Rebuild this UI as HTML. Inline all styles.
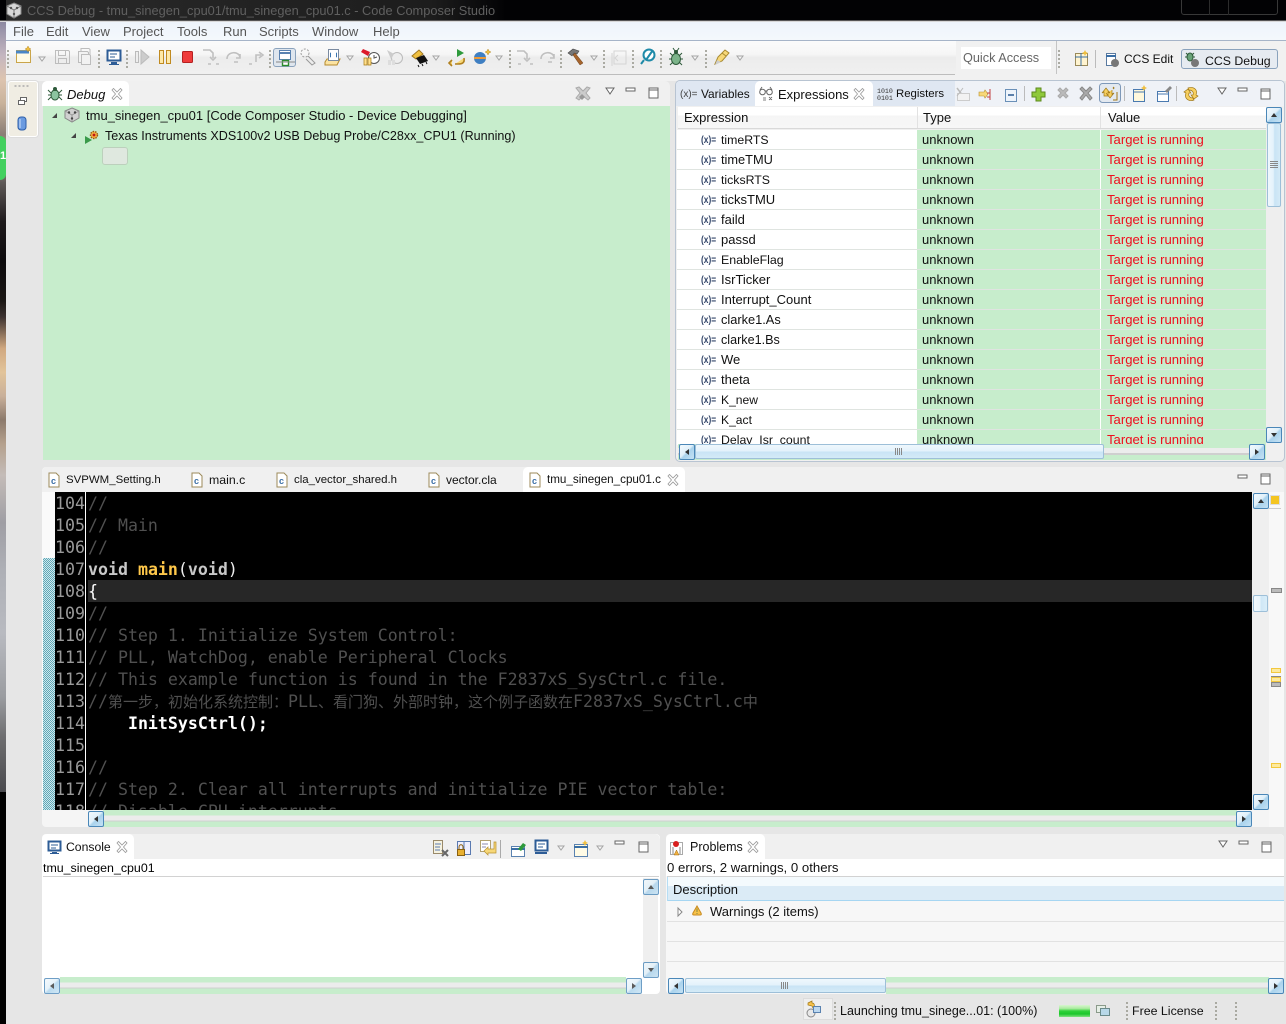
<!DOCTYPE html>
<html><head><meta charset="utf-8"><title>CCS Debug</title>
<style>
html,body{margin:0;padding:0;width:1286px;height:1024px;overflow:hidden;background:#e6e6e6}
#p{position:relative;width:1286px;height:1024px;overflow:hidden;font:13px "Liberation Sans",sans-serif;color:#111}
.a{position:absolute}
.t{position:absolute;white-space:nowrap;line-height:16px;height:16px}
.m{top:24px;color:#555;font-size:13px}
.g{background:#c7edcc}
.r{position:absolute;left:0;width:589px;height:20px}
.r i{position:absolute;font-style:normal;line-height:20px;white-space:nowrap;top:0}
.r .n{left:44px}
.r .k{left:240px;width:183px;height:20px;background:#c7edcc;text-indent:5px}
.r .v{left:424px;width:165px;height:20px;background:#c7edcc;color:#f00c1c;text-indent:6px;font-size:13.1px}
.r .l{position:absolute;left:0;right:0;bottom:0;height:1px;background:#dfe4e0}
.c{position:absolute;left:0;height:22px;font:16.6px/22px "DejaVu Sans Mono","Liberation Mono",monospace;white-space:pre;color:#505050}
.c b{font-weight:bold}
.n1{color:#9a9a9a}
.s3{margin-left:3px}
.cj{font:15px/22px "Noto Sans CJK SC",sans-serif}
.sb{position:absolute;width:14px;height:14px;border:1px solid #4a87b8;border-radius:2px;background:linear-gradient(135deg,#f3f9fd 0,#e0f0fa 45%,#a9d2ec 55%,#c5e2f4 100%);box-sizing:content-box}
.sb.f{opacity:.8}
.sb::after{content:"";position:absolute;width:0;height:0}
.sb.u::after{left:4px;top:5px;border:3px solid transparent;border-bottom:4px solid #333;border-top:0}
.sb.d::after{left:4px;top:5px;border:3px solid transparent;border-top:4px solid #333;border-bottom:0}
.sb.l::after{left:5px;top:4px;border:3px solid transparent;border-right:4px solid #333;border-left:0}
.sb.r2::after{left:5px;top:4px;border:3px solid transparent;border-left:4px solid #333;border-right:0}
.hth{position:absolute;border:1px solid #9dbfd8;border-radius:2px;background:linear-gradient(180deg,#eff8fd 0,#e4f2fb 45%,#c9e4f5 55%,#d4eaf7 100%);box-sizing:border-box}
.tr{position:absolute;background:linear-gradient(180deg,#c7edcc 0,#c7edcc 31%,#ececec 31%,#ececec 62%,#cfcfcf 62%,#cfcfcf 69%,#c7edcc 69%)}
.tab{position:absolute;background:#fff;border-radius:5px 5px 0 0}
.bar{position:absolute;background:#f0f0f0;border-radius:5px 5px 0 0}
</style></head><body><div id="p">

<!-- wallpaper strip -->
<div class="a" style="left:0;top:0;width:6px;height:792px;background:linear-gradient(180deg,#6b6a80 0,#8f8ca4 3%,#c4b6c0 7%,#ddc4b0 10%,#c9b39c 13%,#8a7d76 17%,#b8a090 20%,#5f5a58 23%,#1e1a1c 28%,#0c0a0c 33%,#1a1614 38%,#3c3230 40%,#d0a880 44%,#e2c49a 47%,#c9b09a 50%,#8c7a6c 53%,#b4a08c 56%,#c4bcb8 60%,#9f9ea4 66%,#aeb0b6 72%,#b8bac0 80%,#9a9ca0 88%,#6e6e70 93%,#4a4a4e 100%)"></div>
<div class="a" style="left:0;top:792px;width:6px;height:232px;background:#000"></div>
<div class="a" style="left:0;top:136px;width:6px;height:44px;background:#43d05f;border-radius:0 10px 10px 0"></div>
<div class="t" style="left:0;top:148px;color:#fff;font-weight:bold;font-size:11px">1</div>

<!-- title -->
<div class="a" style="left:0;top:0;width:1286px;height:20px;background:#020204"></div>
<div class="a" style="left:6px;top:0;width:500px;height:20px;background:linear-gradient(90deg,#2a2a2a 0,#1d1d1d 85%,#020204 100%)"></div>
<div class="a" style="left:0;top:20px;width:1286px;height:1px;background:#555"></div>
<div class="a" style="left:0;top:21px;width:1286px;height:1px;background:#d8d8d8"></div>
<div class="t" style="left:27px;top:3px;color:#606060;font-size:12.8px">CCS Debug - tmu_sinegen_cpu01/tmu_sinegen_cpu01.c - Code Composer Studio</div>
<div class="a" style="left:1181px;top:-3px;width:97px;height:18px;border:1px solid #383838;border-radius:3px;box-sizing:border-box"></div>
<div class="a" style="left:1209px;top:0;width:1px;height:15px;background:#2c2c2c"></div>
<div class="a" style="left:1228px;top:0;width:1px;height:15px;background:#2c2c2c"></div>

<!-- menu -->
<div class="a" style="left:6px;top:22px;width:1280px;height:18px;background:linear-gradient(180deg,#eef4fb,#f4f8fc)"></div>
<div class="a" style="left:6px;top:40px;width:1280px;height:1px;background:#a6b4c8"></div>
<div class="t m" style="left:13px">File</div><div class="t m" style="left:46px">Edit</div><div class="t m" style="left:82px">View</div><div class="t m" style="left:123px">Project</div><div class="t m" style="left:177px">Tools</div><div class="t m" style="left:223px">Run</div><div class="t m" style="left:259px">Scripts</div><div class="t m" style="left:312px">Window</div><div class="t m" style="left:373px">Help</div>

<!-- toolbar -->
<div class="a" style="left:6px;top:41px;width:1280px;height:40px;background:#f1f1f1"></div>
<div class="a" style="left:6px;top:41px;width:950px;height:33px;background:linear-gradient(180deg,#fbfbfb 0,#f6f6f6 40%,#ececec 50%,#f0f0f0 100%)"></div>
<div class="a" style="left:6px;top:74px;width:949px;height:1px;background:#bdbdbd"></div>
<div class="a" style="left:956px;top:41px;width:100px;height:33px;background:#f1f1f1"></div>
<div class="a" style="left:1056px;top:41px;width:1px;height:33px;background:#c4c4c4"></div>
<div class="a" style="left:961px;top:47px;width:90px;height:22px;background:#fff"></div>
<div class="t" style="left:963px;top:50px;color:#666;font-size:12.7px">Quick Access</div>
<div class="a" style="left:273px;top:48px;width:23px;height:19px;border:1px solid #8aa2bc;border-radius:3px;background:#dfe6ee;box-sizing:border-box"></div>
<div class="a" style="left:1181px;top:49px;width:97px;height:20px;border:1px solid #8aa2bc;border-radius:3px;background:#e6ebf1;box-sizing:border-box"></div>
<div class="t" style="left:1124px;top:51px;font-size:12px">CCS Edit</div>
<div class="t" style="left:1205px;top:53px;font-size:12.3px">CCS Debug</div>

<!-- left trim -->
<div class="a" style="left:8px;top:81px;width:30px;height:56px;background:#f0ede3;border:1px solid #fff;border-radius:3px;box-shadow:0 0 0 1px #ddd;box-sizing:border-box"></div>

<!-- Debug view -->
<div class="bar" style="left:42px;top:81px;width:628px;height:25px"></div>
<div class="tab" style="left:42px;top:81px;width:87px;height:25px"></div>
<div class="t" style="left:67px;top:87px;font-style:italic;font-size:13px">Debug</div>
<div class="a g" style="left:43px;top:106px;width:627px;height:354px"></div>
<div class="t" style="left:86px;top:108px">tmu_sinegen_cpu01 [Code Composer Studio - Device Debugging]</div>
<div class="t" style="left:105px;top:128px;font-size:12.57px">Texas Instruments XDS100v2 USB Debug Probe/C28xx_CPU1 (Running)</div>
<div class="a" style="left:102px;top:147px;width:26px;height:18px;background:#dfe8df;border:1px solid #bcd0bc;border-radius:3px;box-sizing:border-box"></div>

<!-- Expressions view -->
<div class="a" style="left:675px;top:80px;width:610px;height:382px;border:1px solid #b8c4d2;border-radius:5px;background:#f0f0f0;box-sizing:border-box"></div>
<div class="a" style="left:676px;top:81px;width:608px;height:25px;background:#dfe7f2;border-radius:4px 4px 0 0"></div>
<div class="a" style="left:955px;top:81px;width:329px;height:25px;background:#eff2f7;border-radius:0 4px 0 0"></div>
<div class="tab" style="left:755px;top:81px;width:118px;height:25px"></div>
<div class="t" style="left:701px;top:86px;font-size:11.9px">Variables</div>
<div class="t" style="left:778px;top:87px">Expressions</div>
<div class="t" style="left:896px;top:86px;font-size:11.4px">Registers</div>
<div class="a" style="left:678px;top:107px;width:588px;height:21px;background:linear-gradient(180deg,#fff 0,#fff 40%,#f5f5f5 40%,#f7f7f7 100%)"></div>
<div class="a" style="left:678px;top:128px;width:588px;height:1px;background:#d9d9d9"></div>
<div class="a" style="left:917px;top:107px;width:1px;height:21px;background:#e2e2e2"></div>
<div class="a" style="left:1100px;top:107px;width:1px;height:21px;background:#e2e2e2"></div>
<div class="t" style="left:684px;top:110px">Expression</div><div class="t" style="left:923px;top:110px">Type</div><div class="t" style="left:1108px;top:110px">Value</div>
<div class="a" style="left:677px;top:130px;width:589px;height:315px;overflow:hidden;background:#fff">
<div class="r" style="top:0"><i class="n" style="font-size:12.3px">timeRTS</i><i class="k">unknown</i><i class="v">Target is running</i><span class="l"></span></div>
<div class="r" style="top:20px"><i class="n" style="font-size:12.8px">timeTMU</i><i class="k">unknown</i><i class="v">Target is running</i><span class="l"></span></div>
<div class="r" style="top:40px"><i class="n" style="font-size:12.3px">ticksRTS</i><i class="k">unknown</i><i class="v">Target is running</i><span class="l"></span></div>
<div class="r" style="top:60px"><i class="n">ticksTMU</i><i class="k">unknown</i><i class="v">Target is running</i><span class="l"></span></div>
<div class="r" style="top:80px"><i class="n">faild</i><i class="k">unknown</i><i class="v">Target is running</i><span class="l"></span></div>
<div class="r" style="top:100px"><i class="n">passd</i><i class="k">unknown</i><i class="v">Target is running</i><span class="l"></span></div>
<div class="r" style="top:120px"><i class="n" style="font-size:12.4px">EnableFlag</i><i class="k">unknown</i><i class="v">Target is running</i><span class="l"></span></div>
<div class="r" style="top:140px"><i class="n">IsrTicker</i><i class="k">unknown</i><i class="v">Target is running</i><span class="l"></span></div>
<div class="r" style="top:160px"><i class="n">Interrupt_Count</i><i class="k">unknown</i><i class="v">Target is running</i><span class="l"></span></div>
<div class="r" style="top:180px"><i class="n" style="font-size:12.8px">clarke1.As</i><i class="k">unknown</i><i class="v">Target is running</i><span class="l"></span></div>
<div class="r" style="top:200px"><i class="n" style="font-size:12.6px">clarke1.Bs</i><i class="k">unknown</i><i class="v">Target is running</i><span class="l"></span></div>
<div class="r" style="top:220px"><i class="n">We</i><i class="k">unknown</i><i class="v">Target is running</i><span class="l"></span></div>
<div class="r" style="top:240px"><i class="n">theta</i><i class="k">unknown</i><i class="v">Target is running</i><span class="l"></span></div>
<div class="r" style="top:260px"><i class="n" style="font-size:12.1px">K_new</i><i class="k">unknown</i><i class="v">Target is running</i><span class="l"></span></div>
<div class="r" style="top:280px"><i class="n" style="font-size:12.1px">K_act</i><i class="k">unknown</i><i class="v">Target is running</i><span class="l"></span></div>
<div class="r" style="top:300px"><i class="n" style="font-size:12.3px">Delay_Isr_count</i><i class="k">unknown</i><i class="v">Target is running</i><span class="l"></span></div>
</div>
<!-- expr scrollbars -->
<div class="a" style="left:1266px;top:107px;width:16px;height:336px;background:#eee"></div>
<div class="hth" style="left:1267px;top:123px;width:14px;height:84px;background:linear-gradient(90deg,#eff8fd 0,#e4f2fb 45%,#c9e4f5 55%,#d4eaf7 100%)"></div>
<div class="a" style="left:1270px;top:161px;width:8px;height:8px;background:repeating-linear-gradient(180deg,#888 0,#888 1px,transparent 1px,transparent 2px)"></div>
<div class="sb u" style="left:1266px;top:107px"></div><div class="sb d" style="left:1266px;top:427px"></div>
<div class="a" style="left:678px;top:444px;width:588px;height:16px;background:#c7edcc"></div>
<div class="a" style="left:678px;top:448px;width:572px;height:5px;background:#ececec"></div>
<div class="a" style="left:678px;top:453px;width:572px;height:2px;background:#cfcfcf"></div>
<div class="a" style="left:678px;top:455px;width:588px;height:5px;background:#c7edcc"></div>
<div class="hth" style="left:695px;top:444px;width:409px;height:15px"></div>
<div class="a" style="left:895px;top:448px;width:8px;height:7px;background:repeating-linear-gradient(90deg,#888 0,#888 1px,transparent 1px,transparent 2px)"></div>
<div class="sb l" style="left:679px;top:444px"></div><div class="sb r2" style="left:1249px;top:444px"></div>

<!-- Editor -->
<div class="a" style="left:42px;top:467px;width:1242px;height:360px;background:#f5f5f5;border-radius:4px"></div>
<div class="bar" style="left:42px;top:467px;width:1242px;height:25px"></div>
<div class="tab" style="left:523px;top:467px;width:162px;height:25px"></div>
<div class="t" style="left:66px;top:472px;font-size:11.45px">SVPWM_Setting.h</div>
<div class="t" style="left:209px;top:472px;font-size:12.3px">main.c</div>
<div class="t" style="left:294px;top:472px;font-size:11.45px">cla_vector_shared.h</div>
<div class="t" style="left:446px;top:472px;font-size:12px">vector.cla</div>
<div class="t" style="left:547px;top:472px;font-size:11.65px">tmu_sinegen_cpu01.c</div>
<div class="a" style="left:42px;top:492px;width:13px;height:318px;background:#fafafa"></div>
<div class="a" style="left:43px;top:558px;width:12px;height:252px;background:repeating-conic-gradient(#5fa8b8 0 25%,#d0e8ec 0 50%) 0 0/2px 2px"></div>
<div class="a" style="left:55px;top:492px;width:1197px;height:318px;background:#000;overflow:hidden">
<div class="a" style="left:33px;top:88px;width:1164px;height:22px;background:#272727"></div>
<div class="a" style="left:30px;top:0;width:1px;height:318px;background:#fff"></div>
<div class="c" style="top:1px"><span class="n1">104</span><span class="s3">//</span></div>
<div class="c" style="top:23px"><span class="n1">105</span><span class="s3">// Main</span></div>
<div class="c" style="top:45px"><span class="n1">106</span><span class="s3">//</span></div>
<div class="c" style="top:67px"><span class="n1">107</span><span class="s3" style="color:#c8c8c8"><b>void</b> <b style="color:#ffc84a">main</b><span style="color:#eee">(</span><b>void</b><span style="color:#eee">)</span></span></div>
<div class="c" style="top:89px"><span class="n1">108</span><span class="s3" style="color:#fff">{</span></div>
<div class="c" style="top:111px"><span class="n1">109</span><span class="s3">//</span></div>
<div class="c" style="top:133px"><span class="n1">110</span><span class="s3">// Step 1. Initialize System Control:</span></div>
<div class="c" style="top:155px"><span class="n1">111</span><span class="s3">// PLL, WatchDog, enable Peripheral Clocks</span></div>
<div class="c" style="top:177px"><span class="n1">112</span><span class="s3">// This example function is found in the F2837xS_SysCtrl.c file.</span></div>
<div class="c" style="top:199px"><span class="n1">113</span><span class="s3">//<span class="cj">第一步，初始化系统控制：</span>PLL<span class="cj">、看门狗、外部时钟，这个例子函数在</span>F2837xS_SysCtrl.c<span class="cj">中</span></span></div>
<div class="c" style="top:221px"><span class="n1">114</span><span class="s3" style="color:#fff">    <b>InitSysCtrl();</b></span></div>
<div class="c" style="top:243px"><span class="n1">115</span></div>
<div class="c" style="top:265px"><span class="n1">116</span><span class="s3">//</span></div>
<div class="c" style="top:287px"><span class="n1">117</span><span class="s3">// Step 2. Clear all interrupts and initialize PIE vector table:</span></div>
<div class="c" style="top:309px"><span class="n1">118</span><span class="s3">// Disable CPU interrupts</span></div>
</div>
<div class="a" style="left:1252px;top:492px;width:17px;height:318px;background:#efefef"></div>
<div class="a" style="left:1269px;top:492px;width:15px;height:335px;background:#f8f8f8"></div>
<div class="a" style="left:1269px;top:508px;width:12px;height:1px;background:#ccc"></div>
<div class="a" style="left:1271px;top:496px;width:8px;height:8px;background:#f4c521;box-shadow:0 0 0 1px #ddd"></div>
<div class="a" style="left:1271px;top:588px;width:9px;height:3px;background:#bbb;border:1px solid #888"></div>
<div class="a" style="left:1271px;top:676px;width:8px;height:3px;background:#bbb;border:1px solid #888"></div>
<div class="a" style="left:1271px;top:682px;width:8px;height:3px;background:#bbb;border:1px solid #888"></div>
<div class="a" style="left:1271px;top:668px;width:8px;height:3px;background:#fdeaa0;border:1px solid #f2c83e"></div>
<div class="a" style="left:1271px;top:677px;width:8px;height:3px;background:#fdeaa0;border:1px solid #f2c83e"></div>
<div class="a" style="left:1271px;top:763px;width:8px;height:3px;background:#fdeaa0;border:1px solid #f2c83e"></div>
<div class="hth" style="left:1253px;top:595px;width:15px;height:17px;background:linear-gradient(90deg,#f2f9fd 0,#eaf5fc 45%,#cfe7f6 55%,#daeef9 100%)"></div>
<div class="sb u" style="left:1253px;top:493px"></div><div class="sb d" style="left:1253px;top:794px"></div>
<div class="tr" style="left:103px;top:810px;width:1134px;height:17px"></div>
<div class="sb l" style="left:88px;top:811px"></div><div class="sb r2" style="left:1236px;top:811px"></div>

<!-- Console -->
<div class="a" style="left:42px;top:834px;width:618px;height:160px;background:#fff;border-radius:4px"></div>
<div class="bar" style="left:42px;top:834px;width:618px;height:25px"></div>
<div class="tab" style="left:42px;top:834px;width:92px;height:25px"></div>
<div class="t" style="left:66px;top:839px;font-size:12.2px">Console</div>
<div class="t" style="left:43px;top:860px;color:#000;font-size:12.4px">tmu_sinegen_cpu01</div>
<div class="a" style="left:43px;top:876px;width:616px;height:1px;background:#d2d2d2"></div>
<div class="a" style="left:643px;top:878px;width:15px;height:99px;background:#efefef"></div>
<div class="sb u f" style="left:643px;top:879px"></div><div class="sb d f" style="left:643px;top:962px"></div>
<div class="tr" style="left:60px;top:977px;width:566px;height:17px"></div>
<div class="sb l f" style="left:44px;top:978px"></div><div class="sb r2 f" style="left:626px;top:978px"></div>

<!-- Problems -->
<div class="a" style="left:666px;top:834px;width:618px;height:160px;background:#f7f7f7;border-radius:4px"></div>
<div class="bar" style="left:666px;top:834px;width:618px;height:25px"></div>
<div class="tab" style="left:666px;top:834px;width:99px;height:25px"></div>
<div class="t" style="left:690px;top:839px;font-size:12.5px">Problems</div>
<div class="a" style="left:666px;top:859px;width:618px;height:17px;background:#fff"></div>
<div class="t" style="left:667px;top:860px;font-size:13.2px">0 errors, 2 warnings, 0 others</div>
<div class="a" style="left:667px;top:876px;width:617px;height:1px;background:#d2d2d2"></div>
<div class="a" style="left:667px;top:877px;width:617px;height:24px;background:linear-gradient(180deg,#f4fafd 0,#f4fafd 40%,#dbebf6 40%,#dbebf6 100%);border-bottom:1px solid #a6d6f2;border-left:1px solid #b6ddf4;box-sizing:border-box"></div>
<div class="t" style="left:673px;top:882px">Description</div>
<div class="t" style="left:710px;top:904px">Warnings (2 items)</div>
<div class="a" style="left:667px;top:921px;width:617px;height:1px;background:#e2e2e2"></div>
<div class="a" style="left:667px;top:941px;width:617px;height:1px;background:#e2e2e2"></div>
<div class="a" style="left:667px;top:961px;width:617px;height:1px;background:#e2e2e2"></div>
<div class="tr" style="left:886px;top:977px;width:383px;height:17px"></div>
<div class="hth" style="left:685px;top:978px;width:201px;height:15px"></div>
<div class="a" style="left:781px;top:982px;width:8px;height:7px;background:repeating-linear-gradient(90deg,#888 0,#888 1px,transparent 1px,transparent 2px)"></div>
<div class="sb l" style="left:668px;top:978px"></div><div class="sb r2" style="left:1268px;top:978px"></div>

<!-- Status -->
<div class="a" style="left:803px;top:998px;width:30px;height:22px;background:#efefef;border:1px solid #dcdcdc;box-sizing:border-box"></div>
<div class="t" style="left:840px;top:1003px;font-size:12.5px">Launching tmu_sinege...01: (100%)</div>
<div class="a" style="left:1059px;top:1005px;width:31px;height:12px;background:linear-gradient(180deg,#d8f5d0 0,#aaeb9f 30%,#2fd23a 50%,#1cc62c 75%,#7fe27f 100%)"></div>
<div class="t" style="left:1132px;top:1003px;font-size:12.4px">Free License</div>

<!-- icon overlay -->
<svg class="a" style="left:0;top:0" width="1286" height="1024" viewBox="0 0 1286 1024">
<defs>
<path id="dd" d="M-3 0h6l-3 4z" fill="#f5f5f5" stroke="#a5a5a5"/>
<path id="x" d="M-5-4L-3.5-5.5L0-2L3.5-5.5L5-4L1.5 0L5 4L3.5 5.5L0 2L-3.5 5.5L-5 4L-1.5 0z" fill="#fff" stroke="#999" stroke-width=".8"/>
<g id="mn"><rect x="0" y="0" width="9" height="3" fill="#fff" stroke="#666"/></g>
<g id="mx"><rect x="0" y="0" width="9" height="10" fill="#fff" stroke="#666"/><path d="M0 2h9" stroke="#666"/></g>
<path id="tri" d="M0 0h8l-4 6z" fill="#fff" stroke="#666"/>
<g id="cf"><path d="M0 0h7l3 3v11H0z" fill="#fff" stroke="#9c8a5a"/><text x="2" y="11" font-family="Liberation Sans" font-weight="bold" font-size="9" fill="#3a6ea5">c</text></g>
<g id="dots"><path d="M0 0v2M0 4v2M0 8v2M0 12v2M0 16v2" stroke="#9a9a90" stroke-width="1.6"/></g>
</defs>

<!-- title icon -->
<g transform="translate(6,3)"><path d="M8 0l7 3v8l-7 4-7-4V3z" fill="#d8d8d8" stroke="#888"/><path d="M1 3l7 4 7-4M8 7v8" stroke="#777" fill="none"/><circle cx="5" cy="5" r="1.2" fill="#555"/><circle cx="11" cy="5" r="1.2" fill="#555"/><circle cx="8" cy="11" r="1.2" fill="#555"/></g>

<!-- toolbar separators -->
<use href="#dots" x="8" y="50"/><use href="#dots" x="99" y="50"/><use href="#dots" x="127" y="50"/><use href="#dots" x="270" y="50"/><use href="#dots" x="510" y="50"/><use href="#dots" x="561" y="50"/><use href="#dots" x="604" y="50"/><use href="#dots" x="633" y="50"/><use href="#dots" x="661" y="50"/><use href="#dots" x="706" y="50"/><use href="#dots" x="1059" y="50"/>

<!-- new -->
<rect x="16.5" y="50.5" width="14" height="12" fill="#fffbe6" stroke="#caa54a"/><path d="M16 50.5h13v3H16z" fill="#4a86c6"/><path d="M28 46l1 2 2 1-2 1-1 2-1-2-2-1 2-1z" fill="#f0c040" stroke="#a87a10" stroke-width=".4"/>
<use href="#dd" x="42" y="57"/>
<!-- save -->
<g fill="none" stroke="#bdbdbd"><path d="M55.5 50.5h13l1 1v12h-14z"/><path d="M58.5 50.5v5h7v-5M58.5 63.5v-5h8v5"/><path d="M81 48.5h8l1 1v9h-9z"/><path d="M78.5 51.5h9l1 1v10h-10z" fill="#f2f2f2"/><path d="M81.5 54.5h8l1 1v9h-9z" fill="#f2f2f2"/></g>
<!-- terminal -->
<rect x="107.5" y="50.5" width="13" height="10" fill="#fff" stroke="#2d5c96" stroke-width="2"/><path d="M110 54h7M110 57h5" stroke="#2d5c96"/><path d="M111 62h6v2h-6zM109 64h10v1h-10z" fill="#2d5c96"/>
<!-- resume -->
<path d="M135.5 51.5h3v11h-3z" fill="#eee" stroke="#bbb"/><path d="M141 50l8 7-8 7z" fill="#ccc" stroke="#bbb"/>
<!-- suspend -->
<path d="M159.5 50.5h4v13h-4zM166.5 50.5h4v13h-4z" fill="#ffe9a8" stroke="#c08a20"/>
<!-- terminate -->
<rect x="182.5" y="51.5" width="10" height="11" rx="1" fill="#ef3b3b" stroke="#b52020"/>
<!-- step -->
<g fill="none" stroke="#c0c0c0" stroke-width="1.6"><path d="M203 50h7l3 3v5M210 57l3 3 3-3M208 64h3M216 64h3"/><path d="M227 59c0-8 12-8 13-2M240 54v4h-4M234 62h4"/><path d="M249 64h3M256 62v-7h5M259 52l4 3-4 3"/></g>
<!-- debug box -->
<rect x="279.5" y="50.5" width="11" height="9" fill="#fff" stroke="#5a82b0"/><path d="M279 53h12" stroke="#5a82b0" stroke-width="2"/><rect x="282.5" y="60.5" width="6" height="5" fill="#fff" stroke="#2a8a2a" stroke-width="1.4"/><path d="M276 62h19" stroke="#888"/>
<!-- wrench gray -->
<g fill="none" stroke="#999"><circle cx="305" cy="53" r="4" stroke-dasharray="2 1.5"/><path d="M308 56l7 7 -3 2-6-6"/></g>
<!-- folder -->
<path d="M325 62l2-3h13l-3 6H325z" fill="#fbe3a2" stroke="#b58a2c"/><rect x="328.5" y="49.5" width="10" height="11" fill="#fff" stroke="#7a8aa0"/><path d="M331 53c-1 0 0 2-1 2 1 0 0 2 1 2M336 53c1 0 0 2 1 2-1 0 0 2-1 2" fill="none" stroke="#2a6aa8"/>
<use href="#dd" x="350" y="56"/>
<!-- breakpoint -->
<path d="M363 49l7 3-2 4-7-4z" fill="#dc1b2b"/><circle cx="374" cy="58" r="5.5" fill="#fff" stroke="#555"/><path d="M374 55v3l3-1" stroke="#555" fill="none"/><path d="M364 58h3v7h-3zM368 58h3v7h-3z" fill="#ffe090" stroke="#a87a10" stroke-width=".7"/>
<circle cx="397" cy="58" r="5.5" fill="#eee" stroke="#bbb"/><path d="M387 50l7 4-3 5z" fill="#ccc"/><path d="M388 60h3v5h-3zM392 60h3v5h-3z" fill="#ddd"/>
<!-- chip -->
<path d="M412 56l7-6 4 4-7 5z" fill="#f0c040" stroke="#a07820"/><path d="M416 58l8-3 4 6-8 3z" fill="#111"/><path d="M418 65l1 2M422 64l1 2M426 62l1 2" stroke="#111"/>
<use href="#dd" x="436" y="56"/>
<!-- restart -->
<path d="M457 49l7 4-7 4z" fill="#2e9a3c"/><path d="M464 58c1 5-2 6-6 6h-3M452 60l-3 3 3 3" fill="#f7d878" stroke="#b08020" stroke-width="1.6"/>
<!-- sphere -->
<circle cx="480" cy="58" r="6" fill="#3f7fc2"/><path d="M474 58h12" stroke="#ea9a3a" stroke-width="2"/><path d="M488 49l1 2 2 1-2 1-1 2-1-2-2-1 2-1z" fill="#f0c040" stroke="#a87a10" stroke-width=".4"/>
<use href="#dd" x="499" y="56"/>
<g fill="none" stroke="#c0c0c0" stroke-width="1.6"><path d="M517 51h7l3 3v5M524 58l3 3 3-3M518 64h3M530 64h3"/><path d="M541 59c0-8 12-8 13-2M554 54v4h-4M548 62h4"/></g>
<!-- hammer -->
<path d="M568 53l5-4 6 2-2 3-3-1-2 3z" fill="#777" stroke="#444" stroke-width=".6"/><path d="M573 55l2-2 8 10-3 2z" fill="#a5642c" stroke="#6c3e18" stroke-width=".5"/>
<use href="#dd" x="594" y="56"/>
<!-- greyed -->
<path d="M614 51h12v13h-12zM612 53v13" fill="none" stroke="#d4d4d4"/><path d="M618 55l-3 3 3 3" fill="none" stroke="#d4d4d4"/>
<!-- magnifier -->
<circle cx="649" cy="55" r="5.5" fill="#fff" stroke="#1e8aa8" stroke-width="2"/><path d="M644 60l-3 4M653 50l-7 10" stroke="#1e8aa8" stroke-width="2"/>
<!-- bug -->
<ellipse cx="676" cy="59" rx="4.5" ry="5.5" fill="#7cb48a" stroke="#2e5a3a"/><circle cx="676" cy="52" r="2" fill="#2e5a3a"/><path d="M670 53l3 3M682 53l-3 3M669 59h3M680 59h3M670 65l3-3M682 65l-3-3M673 48l2 3M679 48l-2 3" stroke="#2e5a3a" fill="none"/>
<use href="#dd" x="695" y="56"/>
<!-- pen -->
<path d="M715 64l3-7 7-7 4 3-7 8z" fill="#f7d878" stroke="#a88a30"/><path d="M715 65l2-5 4 2z" fill="#ccc"/><path d="M722 53l4 3" stroke="#a88a30"/>
<use href="#dd" x="740" y="56"/>

<!-- perspective -->
<rect x="1075.5" y="53.5" width="12" height="12" fill="#fff4d0" stroke="#9a8a5a"/><path d="M1075 57h13M1081 53v13" stroke="#3a6ea5"/><path d="M1085 50l1 2 2 1-2 1-1 2-1-2-2-1 2-1z" fill="#f0c040"/>
<path d="M1095.5 50v18" stroke="#bbb"/>
<rect x="1106.5" y="53.5" width="9" height="12" fill="#fff" stroke="#5a7aa0"/><path d="M1106 56h10" stroke="#3a6ea5" stroke-width="2"/><circle cx="1115" cy="63" r="4" fill="#777"/>
<ellipse cx="1190" cy="57" rx="3" ry="4" fill="#6aa47a" stroke="#2e5a3a"/><path d="M1186 53l2 2M1194 53l-2 2M1185 57h2M1193 57h2" stroke="#2e5a3a"/><circle cx="1195" cy="63" r="4" fill="#777"/>

<!-- trim -->
<path d="M14.5 86h2M18.5 86h2M22.5 86h2M26.5 86h2" stroke="#aaa" stroke-width="1.5"/>
<rect x="20.5" y="97.5" width="6" height="4" fill="#fff" stroke="#666"/><rect x="18.5" y="100.5" width="6" height="4" fill="#fff" stroke="#666"/>
<rect x="18" y="117" width="8" height="13" rx="3" fill="#6b9be0" stroke="#2d5ea8"/><path d="M20 119v9" stroke="#cfe0f8"/>

<!-- debug tab -->
<ellipse cx="55" cy="95" rx="4" ry="5" fill="#8cc4a0" stroke="#2e5a3a"/><circle cx="55" cy="89" r="2" fill="#2e5a3a"/><path d="M48 90l3 3M62 90l-3 3M48 95h3M59 95h3M48 100l3-3M62 100l-3-3" stroke="#2e5a3a" fill="none"/>
<use href="#x" x="117" y="94"/>
<!-- tree -->
<path d="M52 118l5-5v5z" fill="#444"/><path d="M71 138l5-5v5z" fill="#444"/>
<g transform="translate(65,108)"><path d="M7 0l7 3v7l-7 4-7-4V3z" fill="#d0d0d0" stroke="#888"/><path d="M0 3l7 4 7-4M7 7v7" stroke="#999" fill="none"/><circle cx="4" cy="4.5" r="1.2" fill="#444"/><circle cx="10" cy="4.5" r="1.2" fill="#444"/><circle cx="7" cy="10.5" r="1.2" fill="#444"/></g>
<path d="M85 136l7 4-7 4z" fill="#3a9a4a"/><circle cx="94" cy="135" r="3.5" fill="#f4b040" stroke="#9a5a10" stroke-width="1.4" stroke-dasharray="1.5 1"/><circle cx="94" cy="135" r="1.4" fill="#c01818"/>
<!-- debug view tool -->
<g fill="#ccc" stroke="#aaa"><path d="M576 88l3-1 4 4 4-4 3 1-4 5 4 5-2 2-5-4-4 4-3-2 4-5z"/></g>
<path d="M582 94l3 3 -3 3-3-3z" fill="#999"/>
<use href="#tri" x="606" y="88"/><use href="#mn" x="626" y="88"/><use href="#mx" x="649" y="88"/>

<!-- expression tabs -->
<text x="680" y="97" font-family="Liberation Sans" font-size="10" fill="#444">(x)=</text>
<g fill="none" stroke="#666"><circle cx="762.5" cy="92" r="2.8"/><circle cx="769.5" cy="92" r="2.8"/><path d="M765 91h2M760 90l2-3M772 90l-2-3"/></g><path d="M763 98h3M763 100h3M769 97l3 3M772 97l-3 3" stroke="#555" stroke-width=".8"/>
<use href="#x" x="859" y="94"/>
<text x="877" y="93" font-family="Liberation Mono" font-size="6.6" fill="#333">1010</text><text x="877" y="100" font-family="Liberation Mono" font-size="6.6" fill="#333">0101</text>
<!-- expr toolbar -->
<g><path d="M957 88l6 8" stroke="#bbb" stroke-width="1.5"/><rect x="957.5" y="93.5" width="12" height="7" fill="#f2f2f2" stroke="#ccc"/><path d="M963 88l-6 8" stroke="#bbb"/></g>
<path d="M979 92h5l1-2 3 4-3 4-1-2h-5z" fill="#f7d878" stroke="#b89030" stroke-width=".6"/><path d="M990 89v11M987 93h3M987 97h3" stroke="#c04040" fill="none"/>
<rect x="1005.5" y="89.5" width="11" height="12" fill="#eef4fb" stroke="#6a90b8"/><path d="M1008 95h6" stroke="#2a5a90" stroke-width="1.5"/>
<path d="M1024.5 86v15" stroke="#bbb"/>
<path d="M1036 88h5v4h4v5h-4v4h-5v-4h-4v-5h4z" fill="#8fc93a" stroke="#5e8a1e"/>
<path d="M1058 90l2-2 3 3 3-3 2 2-3 3 3 3-2 2-3-3-3 3-2-2 3-3z" fill="#bbb" stroke="#aaa"/>
<path d="M1080 89l2-2 4 4 4-4 2 2-4 4 4 5-2 2-4-5-4 5-2-2 4-5z" fill="#aaa" stroke="#888"/>
<rect x="1099.5" y="83.5" width="21" height="19" rx="3" fill="#e3e9f0" stroke="#7d98b8"/>
<path d="M1104 96v-4l-2 1 4-5 4 5-2-1v4zM1112 90v4l2-1-4 5-4-5" fill="#f7d060" stroke="#a07818" stroke-width=".7"/><path d="M1113 87l1 1-1 1M1113 100h4v-8" stroke="#a07818" fill="none"/>
<path d="M1124.5 86v15" stroke="#bbb"/>
<rect x="1133.5" y="89.5" width="11" height="12" fill="#fff8dc" stroke="#4a7ab0"/><path d="M1133 92h12" stroke="#4a7ab0"/><path d="M1144 85l1 2 2 1-2 1-1 2-1-2-2-1 2-1z" fill="#f0c040"/>
<rect x="1157.5" y="91.5" width="11" height="10" fill="#fff" stroke="#4a7ab0"/><path d="M1157 94h12" stroke="#4a7ab0"/><path d="M1165 91l5-5 2 2-5 5z" fill="#888"/>
<path d="M1176.5 86v15" stroke="#bbb"/>
<path d="M1188 88c6-2 10 2 8 7l2 1-4 3-3-4 2 0c1-3-1-5-4-5zM1194 100c-6 2-10-2-8-7l-2-1 4-3 3 4-2 0c-1 3 1 5 4 5z" fill="#f7d060" stroke="#a07818" stroke-width=".7"/>
<use href="#tri" x="1218" y="88"/><use href="#mn" x="1238" y="88"/><use href="#mx" x="1261" y="89"/>

<!-- (x)= row icons -->
<g transform="translate(701 0) scale(.8 1)" font-family="Liberation Sans" font-size="10.5" fill="#34476a" font-weight="bold">
<text x="0" y="143">(x)=</text><text x="0" y="163">(x)=</text><text x="0" y="183">(x)=</text><text x="0" y="203">(x)=</text><text x="0" y="223">(x)=</text><text x="0" y="243">(x)=</text><text x="0" y="263">(x)=</text><text x="0" y="283">(x)=</text><text x="0" y="303">(x)=</text><text x="0" y="323">(x)=</text><text x="0" y="343">(x)=</text><text x="0" y="363">(x)=</text><text x="0" y="383">(x)=</text><text x="0" y="403">(x)=</text><text x="0" y="423">(x)=</text>
</g>
<clipPath id="cl"><rect x="690" y="430" width="40" height="14"/></clipPath>
<g clip-path="url(#cl)"><text transform="translate(701 0) scale(.8 1)" x="0" y="443" font-family="Liberation Sans" font-size="10.5" fill="#34476a" font-weight="bold">(x)=</text></g>

<!-- editor tabs -->
<use href="#cf" x="49" y="473"/><use href="#cf" x="192" y="473"/><use href="#cf" x="277" y="473"/><use href="#cf" x="429" y="473"/><use href="#cf" x="530" y="473"/>
<use href="#x" x="673" y="480"/>
<use href="#mn" x="1238" y="475"/><use href="#mx" x="1261" y="474"/>

<!-- console -->
<rect x="48.5" y="841.5" width="12" height="9" fill="#fff" stroke="#2d5c96" stroke-width="2"/><path d="M51 845h7M51 848h5" stroke="#2d5c96"/><path d="M52 852h5v1h-5zM50 853h9v1h-9z" fill="#2d5c96"/>
<use href="#x" x="122" y="847"/>
<rect x="433.5" y="840.5" width="9" height="13" fill="#f5f2e0" stroke="#9a8a6a"/><path d="M435 844h6M435 847h5M435 850h5" stroke="#5a7ab0"/><path d="M442 850l6 6M448 850l-6 6" stroke="#666" stroke-width="2"/>
<rect x="457.5" y="841.5" width="13" height="13" fill="#eef" stroke="#5a7ab0"/><path d="M464 841v13" stroke="#5a7ab0"/><rect x="457.5" y="849.5" width="7" height="6" fill="#e8b030" stroke="#8a6010"/><path d="M459 849v-2c0-3 4-3 4 0v2" fill="none" stroke="#8a6010"/>
<rect x="480.5" y="840.5" width="10" height="11" fill="#fff" stroke="#b0a070"/><path d="M482 844h6M482 847h4" stroke="#8a8ab0"/><path d="M494 842v7h-6v-2l-4 4 4 4v-2h8v-11z" fill="#f7d878" stroke="#b89030" stroke-width=".7"/>
<path d="M500.5 840v18" stroke="#aaa"/>
<rect x="511.5" y="846.5" width="13" height="10" fill="#fff" stroke="#5a82b0"/><path d="M511 849h14" stroke="#3a6ea5" stroke-width="2"/><path d="M518 849l5-6 3 2-5 6z" fill="#2e9a3c"/>
<rect x="535.5" y="840.5" width="12" height="10" fill="#fff" stroke="#2d5c96" stroke-width="2"/><path d="M538 844h7M538 847h5" stroke="#2d5c96"/><path d="M535 852h12v2h-12z" fill="#2d5c96"/>
<use href="#dd" x="561" y="846"/>
<rect x="574.5" y="844.5" width="13" height="12" fill="#fffbe6" stroke="#5a82b0"/><path d="M574 847h14" stroke="#3a6ea5" stroke-width="2"/><path d="M585 840l1 2 2 1-2 1-1 2-1-2-2-1 2-1z" fill="#f0c040"/>
<use href="#dd" x="600" y="846"/>
<use href="#mn" x="615" y="841"/><use href="#mx" x="639" y="842"/>

<!-- problems -->
<rect x="670.5" y="842.5" width="12" height="12" fill="#fff" stroke="#aaa"/><circle cx="676" cy="844" r="3" fill="#d82020"/><path d="M673 847v7M680 847v7" stroke="#888"/><path d="M674 855l2.5-5 2.5 5z" fill="#f0b040" stroke="#a06a10" stroke-width=".5"/>
<use href="#x" x="753" y="847"/>
<use href="#tri" x="1219" y="841"/><use href="#mn" x="1239" y="841"/><use href="#mx" x="1262" y="842"/>
<path d="M678 908l4 4-4 4z" fill="#fff" stroke="#888"/>
<path d="M697 906l4 7q1 2-1 2h-6q-2 0-1-2z" fill="#f7c24a" stroke="#c88a20"/><path d="M697 908.5v3.5M697 913v1" stroke="#884" stroke-width="1"/>

<!-- status -->
<use href="#dots" x="835" y="1002"/>
<circle cx="811" cy="1013" r="4" fill="#e8e8e8" stroke="#888"/><path d="M808 1003l4-2v2c3 0 3 4 1 5l-1-2-4-1z" fill="#f7c24a" stroke="#a07818" stroke-width=".7"/><rect x="813.5" y="1006.5" width="7" height="6" fill="#bcd8f0" stroke="#5a82b0"/>
<rect x="1096.5" y="1005.5" width="9" height="7" fill="#e6efe6" stroke="#8a9a8a"/><rect x="1100.5" y="1008.5" width="9" height="7" fill="#b8d8e8" stroke="#6a8a8a"/>
<use href="#dots" x="1127" y="1002"/><use href="#dots" x="1216" y="1002"/><use href="#dots" x="1236" y="1002"/>
</svg>
</div></body></html>
